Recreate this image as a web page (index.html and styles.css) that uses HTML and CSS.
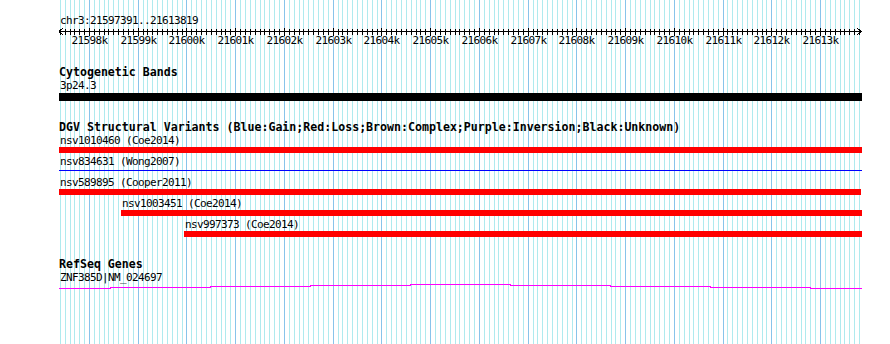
FILE: index.html
```html
<!DOCTYPE html>
<html>
  <head>
    <title>chr3:21597391..21613819</title>
    <link rel="stylesheet" href="styles.css">
  </head>
  <body>
    <div class="panel" id="panel">
      <svg class="grid" id="grid" width="803" height="344"></svg>

      <div class="ruler">
        <div class="landmark">chr3:21597391..21613819</div>
        <svg class="axis" id="axis" width="803" height="20"></svg>
      </div>

      <div class="track band-track">
        <div class="track-title">Cytogenetic Bands</div>
        <div class="label">3p24.3</div>
        <div class="bar band"></div>
      </div>

      <div class="track dgv-track">
        <div class="track-title">DGV Structural Variants (Blue:Gain;Red:Loss;Brown:Complex;Purple:Inversion;Black:Unknown)</div>
        <div class="feature" data-start="21590000" data-end="21620000">
          <div class="label">nsv1010460 (Coe2014)</div>
          <div class="bar loss"></div>
        </div>
        <div class="feature" data-start="21590000" data-end="21620000">
          <div class="label">nsv834631 (Wong2007)</div>
          <div class="bar gain"></div>
        </div>
        <div class="feature" data-start="21590000" data-end="21613829">
          <div class="label">nsv589895 (Cooper2011)</div>
          <div class="bar loss"></div>
        </div>
        <div class="feature" data-start="21598646" data-end="21620000">
          <div class="label">nsv1003451 (Coe2014)</div>
          <div class="bar loss"></div>
        </div>
        <div class="feature" data-start="21599939" data-end="21620000">
          <div class="label">nsv997373 (Coe2014)</div>
          <div class="bar loss"></div>
        </div>
      </div>

      <div class="track gene-track">
        <div class="track-title">RefSeq Genes</div>
        <div class="label">ZNF385D|NM_024697</div>
        <svg class="intron" width="803" height="6">
          <rect x="0" y="5" width="52" height="1" />
          <rect x="51" y="4" width="101" height="1" />
          <rect x="151" y="3" width="101" height="1" />
          <rect x="251" y="2" width="101" height="1" />
          <rect x="351" y="1" width="101" height="1" />
          <rect x="451" y="2" width="101" height="1" />
          <rect x="551" y="3" width="101" height="1" />
          <rect x="651" y="4" width="101" height="1" />
          <rect x="751" y="5" width="52" height="1" />
        </svg>
      </div>
    </div>

    <script>
      const viewStart = 21597391;
      const viewEnd = 21613819;
      const panelWidth = 803;
      const scale = 0.04874; // pixels per bp
      const ns = "http://www.w3.org/2000/svg";

      function toPixel(pos) {
        return 0.82 + (pos - viewStart) * scale;
      }

      function clamp(x) {
        return Math.max(0, Math.min(panelWidth, x));
      }

      function addRect(svg, x, y, w, h, cls) {
        const rect = document.createElementNS(ns, "rect");
        rect.setAttribute("x", x);
        rect.setAttribute("y", y);
        rect.setAttribute("width", w);
        rect.setAttribute("height", h);
        rect.setAttribute("class", cls);
        svg.appendChild(rect);
      }

      // grid lines every 100bp, darker every 1kb
      const grid = document.getElementById("grid");
      const axis = document.getElementById("axis");
      const first = Math.ceil(viewStart / 100) * 100;

      addRect(axis, 0, 4, panelWidth, 1, "axis-line");

      for (let pos = first; pos <= viewEnd; pos += 100) {
        const x = Math.floor(toPixel(pos));
        const major = pos % 1000 === 0;
        addRect(grid, x, 0, 1, 344, major ? "major" : "minor");

        if (major) {
          addRect(axis, x, 1, 1, 8, "tick");
          const label = document.createElementNS(ns, "text");
          label.setAttribute("x", x + 0.5);
          label.setAttribute("y", 17);
          label.setAttribute("class", "tick-label");
          label.textContent = pos / 1000 + "k";
          axis.appendChild(label);
        } else {
          addRect(axis, x, 2, 1, 6, "tick");
        }
      }

      // arrow heads on both ends of the ruler
      [
        "4,1 0,4.5 4,8",
        "798,1 802,4.5 798,8",
      ].forEach((points) => {
        const head = document.createElementNS(ns, "polyline");
        head.setAttribute("points", points);
        head.setAttribute("class", "arrow");
        axis.appendChild(head);
      });

      // place features by their genomic coordinates
      document.querySelectorAll(".feature").forEach((feature) => {
        const left = clamp(toPixel(parseInt(feature.dataset.start)));
        const right = clamp(toPixel(parseInt(feature.dataset.end)));
        feature.style.marginLeft = Math.round(left) + "px";
        feature.style.width = Math.round(right - left) + "px";
      });
    </script>
  </body>
</html>
```

FILE: styles.css
```css
body {
  margin: 0;
  background-color: #ffffff;
  color: #000000;
  font-family: "DejaVu Sans Mono", "Liberation Mono", monospace;
  overflow: hidden;
}

.panel {
  position: relative;
  width: 803px;
  height: 344px;
  margin-left: 59px;
  overflow: hidden;
}

.grid {
  position: absolute;
  top: 0;
  left: 0;
  z-index: 0;
}
.grid .minor {
  fill: #afeaee;
}
.grid .major {
  fill: #88c4ea;
}

.ruler,
.track {
  position: relative;
  z-index: 1;
}

.ruler {
  padding-top: 15px;
}
.landmark,
.label {
  padding-left: 1px;
  font-size: 11px;
  letter-spacing: -0.62px;
  line-height: 12px;
  white-space: nowrap;
}
.axis {
  display: block;
  shape-rendering: crispEdges;
}
.axis .axis-line,
.axis .tick {
  fill: #000000;
}
.axis .arrow {
  fill: none;
  stroke: #000000;
  stroke-width: 1;
}
.tick-label {
  font-family: "DejaVu Sans Mono", monospace;
  font-size: 11px;
  letter-spacing: -0.62px;
  text-anchor: middle;
  fill: #000000;
}

.track-title {
  margin-bottom: 1px;
  font-size: 11.6px;
  font-weight: bold;
  line-height: 13px;
  white-space: nowrap;
}

.band-track {
  margin-top: 19px;
}
.bar {
  height: 6px;
}
.bar.band {
  height: 8px;
  margin-top: 1px;
  background-color: #000000;
}

.dgv-track {
  margin-top: 20px;
}
.dgv-track .feature {
  padding-bottom: 3px;
}
.bar.loss {
  background-color: #ff0000;
}
.bar.gain {
  height: 1px;
  margin: 2px 0 3px;
  background-color: #0000ff;
}

.gene-track {
  margin-top: 18px;
}
.intron {
  display: block;
  margin-top: -1px;
  fill: #ff00ff;
  shape-rendering: crispEdges;
}
```
